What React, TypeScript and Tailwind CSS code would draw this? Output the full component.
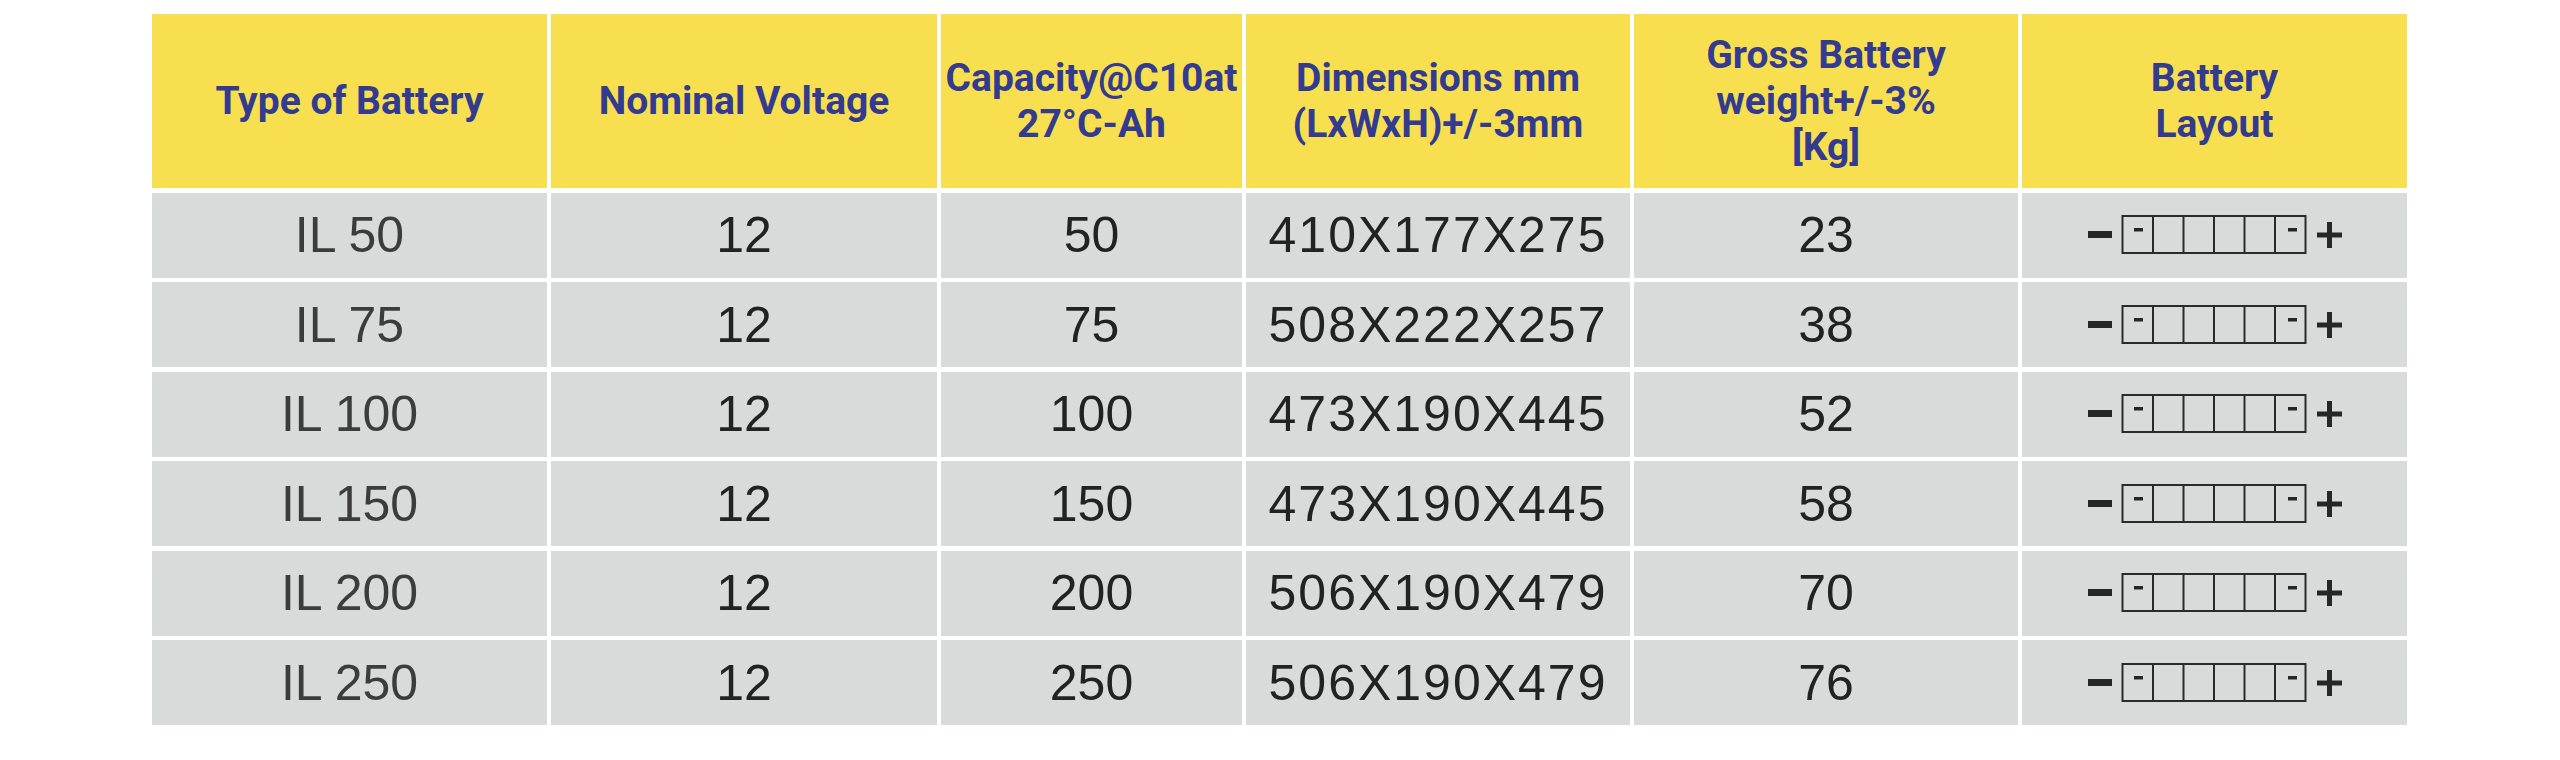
const headers = [
  ['Type of Battery'],
  ['Nominal Voltage'],
  ['Capacity@C10at', '27°C-Ah'],
  ['Dimensions mm', '(LxWxH)+/-3mm'],
  ['Gross Battery', 'weight+/-3%', '[Kg]'],
  ['Battery', 'Layout'],
];

const rows = [
  { type: 'IL 50', voltage: '12', capacity: '50', dims: '410X177X275', weight: '23' },
  { type: 'IL 75', voltage: '12', capacity: '75', dims: '508X222X257', weight: '38' },
  { type: 'IL 100', voltage: '12', capacity: '100', dims: '473X190X445', weight: '52' },
  { type: 'IL 150', voltage: '12', capacity: '150', dims: '473X190X445', weight: '58' },
  { type: 'IL 200', voltage: '12', capacity: '200', dims: '506X190X479', weight: '70' },
  { type: 'IL 250', voltage: '12', capacity: '250', dims: '506X190X479', weight: '76' },
];

// six cells, a terminal mark in the first and last, - and + outside
const BatteryLayout = () => (
  <svg width="256" height="40" viewBox="0 0 256 40">
    <rect x="1" y="16" width="24" height="7" fill="#262626" />
    <rect x="35.5" y="1" width="183" height="37" fill="none" stroke="#2a2a2a" strokeWidth="2" />
    {[1, 2, 3, 4, 5].map((i) => (
      <line key={i} x1={35.5 + 30.5 * i} y1="1" x2={35.5 + 30.5 * i} y2="38" stroke="#2a2a2a" strokeWidth="2" />
    ))}
    <rect x="47" y="13" width="9" height="3.5" fill="#262626" />
    <rect x="201" y="13" width="9" height="3.5" fill="#262626" />
    <rect x="230" y="17.5" width="25" height="5" fill="#262626" />
    <rect x="240" y="7" width="5" height="26" fill="#262626" />
  </svg>
);

const Cell = ({ children, className = '' }: { children: React.ReactNode; className?: string }) => (
  <div className={`bg-[#d9dbda] flex items-center justify-center ${className}`}>{children}</div>
);

export default function App() {
  return (
    <div className="min-h-screen bg-white pt-[14px] pl-[152px]">
      <div className="grid grid-cols-[395px_386px_301px_384px_384px_385px] grid-rows-[174px_repeat(6,85px)] gap-x-[4px] gap-y-[4.5px] w-max">
        {headers.map((lines, i) => (
          <div
            key={i}
            className="bg-[#f7df50] flex flex-col items-center justify-center text-center text-[#323b8f] font-bold text-[39px] leading-[46px] font-['Roboto',sans-serif]"
          >
            {lines.map((l) => (
              <span key={l} className="whitespace-nowrap">{l}</span>
            ))}
          </div>
        ))}
        {rows.map((r) => (
          <div key={r.type} className="contents font-['Liberation_Sans',Arial,sans-serif] text-[50px] leading-none">
            <Cell className="text-[#3c3c3c]">{r.type}</Cell>
            <Cell className="text-[#222]">{r.voltage}</Cell>
            <Cell className="text-[#222]">{r.capacity}</Cell>
            <Cell className="text-[#222] tracking-[2px]">{r.dims}</Cell>
            <Cell className="text-[#222]">{r.weight}</Cell>
            <Cell>
              <BatteryLayout />
            </Cell>
          </div>
        ))}
      </div>
    </div>
  );
}
